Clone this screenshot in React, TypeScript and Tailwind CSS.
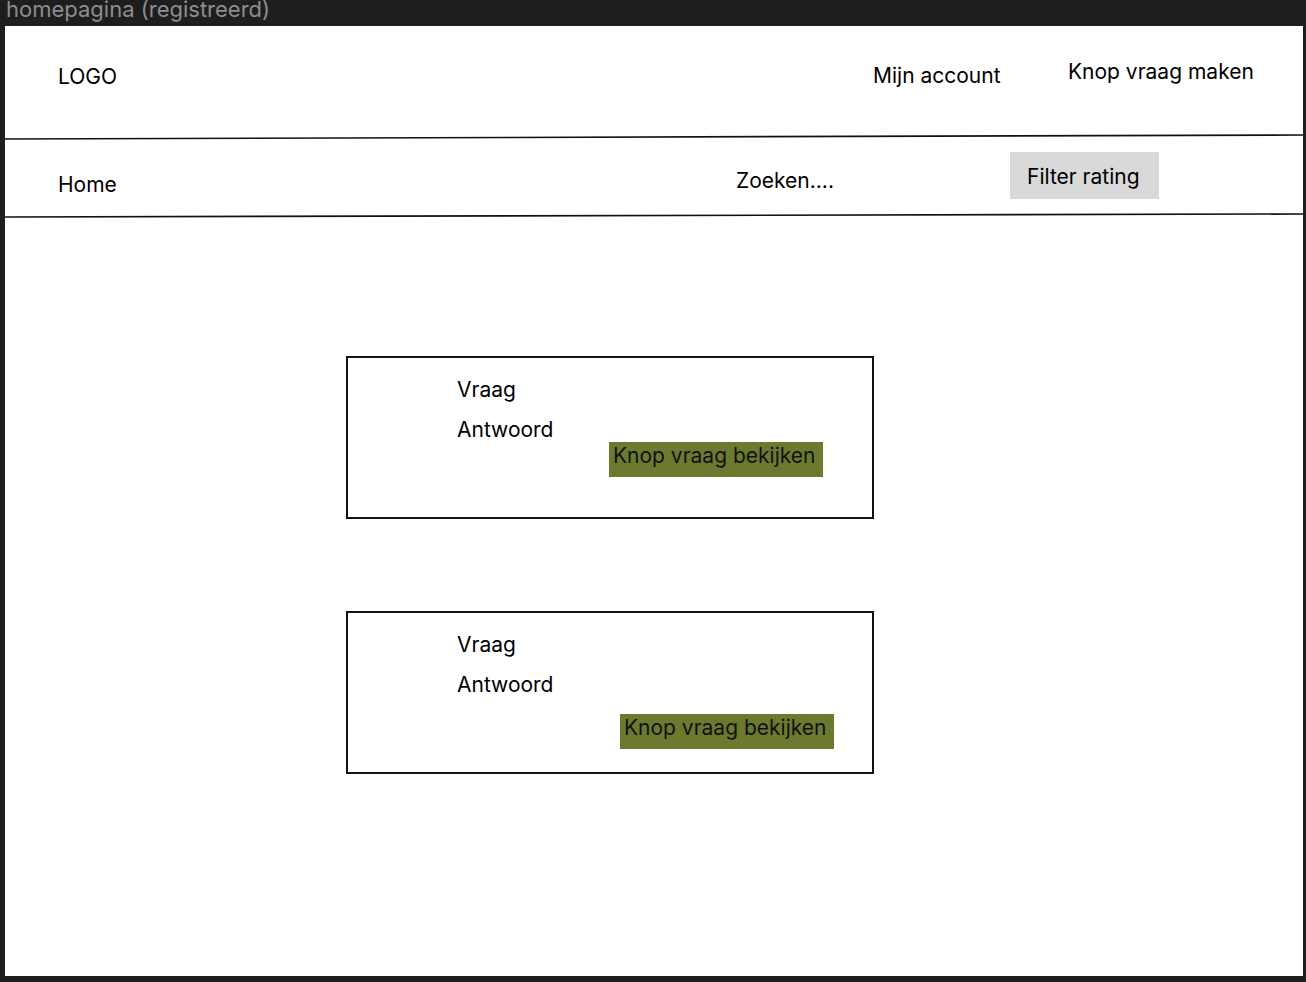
import React from "react";

const Divider = ({ from, to }: { from: number; to: number }) => (
  <svg width="1298" height="8" className="block">
    <line x1="0" y1={from} x2="1298" y2={to} stroke="#111" strokeWidth="1.6" />
  </svg>
);

const QuestionCard = ({
  antwoordGap,
  buttonTop,
  buttonLeft,
}: {
  antwoordGap: string;
  buttonTop: string;
  buttonLeft: string;
}) => (
  <div className="box-border w-[528px] h-[163px] border-2 border-[#111] pl-[109px] pt-[20px]">
    <div className="h-[24px]">Vraag</div>
    <div className={`h-[24px] ${antwoordGap}`}>Antwoord</div>
    <div
      className={`w-[214px] h-[35px] bg-[#6c7a2f] pl-[4px] pt-[2px] text-[#111] whitespace-nowrap ${buttonTop} ${buttonLeft}`}
    >
      Knop vraag bekijken
    </div>
  </div>
);

export default function App() {
  return (
    <div
      className="w-[1306px] h-[982px] bg-[#1e1e1e] text-[21px] leading-[24px] text-black"
      style={{ fontFamily: "Inter, 'Liberation Sans', sans-serif" }}
    >
      {/* frame title */}
      <div className="h-[26px] pl-[6px] text-[#8d8d8d] text-[22px] leading-[18px] whitespace-nowrap">
        homepagina (registreerd)
      </div>

      <div className="ml-[5px] w-[1298px] h-[950px] bg-white">
        {/* top bar */}
        <div className="h-[107px] flex items-start">
          <div className="w-[868px] pl-[53px] mt-[39px]">LOGO</div>
          <div className="w-[195px] mt-[38px]">Mijn account</div>
          <div className="mt-[34px]">Knop vraag maken</div>
        </div>
        <Divider from={6} to={2} />

        {/* nav bar */}
        <div className="h-[70px] flex items-start">
          <div className="w-[731px] pl-[53px] mt-[32px]">Home</div>
          <div className="w-[274px] mt-[28px]">Zoeken....</div>
          <div className="mt-[11px] w-[149px] h-[47px] bg-[#d9d9d9] pl-[17px] pt-[13px]">
            Filter rating
          </div>
        </div>
        <Divider from={6} to={3} />

        {/* questions */}
        <div className="pl-[341px] pt-[137px] flex flex-col gap-[92px]">
          <QuestionCard antwoordGap="mt-[16px]" buttonTop="mt-0" buttonLeft="ml-[152px]" />
          <QuestionCard antwoordGap="mt-[16px]" buttonTop="mt-[17px]" buttonLeft="ml-[163px]" />
        </div>
      </div>
    </div>
  );
}
